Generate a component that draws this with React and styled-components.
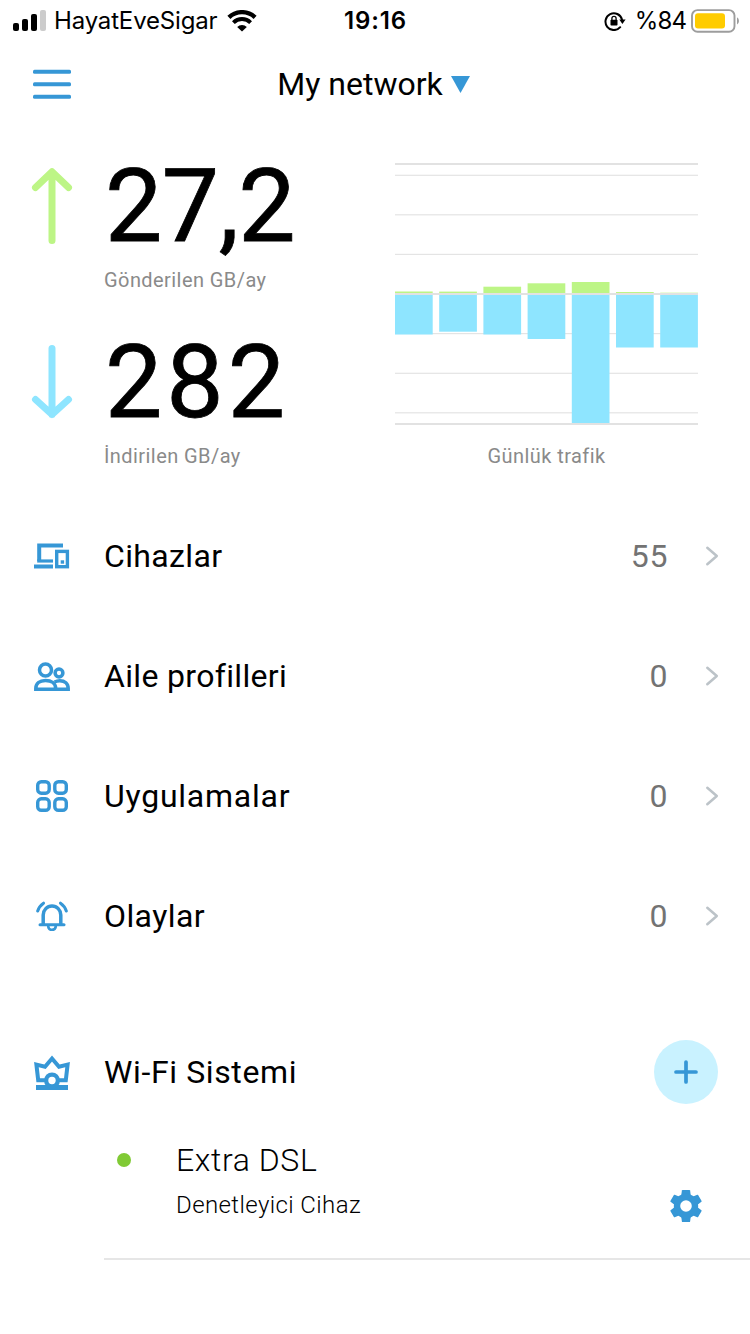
import React from "react";
import styled, { createGlobalStyle } from "styled-components";

const BLUE = "#3697d6";
const GREEN = "#bdf586";
const SKY = "#8ee5ff";

const GlobalStyle = createGlobalStyle`
  * { box-sizing: border-box; }
  body {
    margin: 0;
    background: #fff;
    color: #000;
    font-family: Roboto, "Noto Sans", sans-serif;
  }
`;

const Screen = styled.main`
  width: 750px;
  height: 1334px;
  overflow: hidden;
  background: #fff;
`;

const StatusBar = styled.div`
  display: grid;
  grid-template-columns: 1fr auto 1fr;
  align-items: center;
  height: 40px;
  padding: 0 11px 0 13px;
  font-family: Inter, sans-serif;
  font-size: 24px;
  line-height: 40px;
`;

const StatusGroup = styled.div`
  display: flex;
  align-items: center;
  justify-content: ${(p) => p.$align || "flex-start"};
`;

const Carrier = styled.span`
  margin: 1px 10px 0 7px;
  letter-spacing: -0.16px;
`;

const Clock = styled.span`
  margin: 1px 1px 0 0;
  font-weight: 600;
  letter-spacing: 0.9px;
`;

const Percent = styled.span`
  margin: 1px 5px 0 9px;
  letter-spacing: -0.9px;
`;

const Header = styled.header`
  display: grid;
  grid-template-columns: 71px 1fr 71px;
  align-items: center;
  height: 88px;
`;

const IconButton = styled.button`
  display: flex;
  align-items: center;
  justify-content: flex-end;
  padding: 0;
  border: 0;
  background: none;
`;

const NetworkPicker = styled.div`
  display: flex;
  align-items: center;
  justify-content: center;
  gap: 8px;
  padding-right: 3px;
  font-size: 32px;
  line-height: 40px;
`;

const Stats = styled.section`
  display: grid;
  grid-template-columns: 395px 303px;
  height: 368px;
  padding-top: 26px;
`;

const StatColumn = styled.div`
  display: flex;
  flex-direction: column;
  gap: 38px;
`;

const Stat = styled.div`
  display: grid;
  grid-template-columns: 104px 1fr;
`;

const StatArrow = styled.div`
  display: flex;
  justify-content: center;
  align-items: center;
  height: 104px;
`;

const StatValue = styled.div`
  height: 100px;
  padding-left: 1px;
  font-size: 102px;
  line-height: 104px;
  letter-spacing: ${(p) => p.$tracking}px;
  -webkit-text-stroke: 0.8px #000;
`;

const Caption = styled.div`
  font-size: 20px;
  line-height: 24px;
  letter-spacing: 0.43px;
  color: #8a8a8a;
`;

const StatCaption = styled(Caption)`
  margin-top: 14px;
`;

const ChartColumn = styled.div`
  display: flex;
  flex-direction: column;
  align-items: center;
  padding-top: 6px;
`;

const ChartCaption = styled(Caption)`
  margin-top: 16px;
`;

const Row = styled.div`
  display: grid;
  grid-template-columns: 104px 1fr auto 82px;
  align-items: center;
  height: 120px;
  font-size: 32px;
  line-height: 40px;
`;

const RowIcon = styled.div`
  display: flex;
  justify-content: center;
`;

const RowLabel = styled.div`
  letter-spacing: ${(p) => p.$tracking}px;
`;

const RowCount = styled.div`
  font-size: 32px;
  color: #737373;
  letter-spacing: 0.6px;
`;

const RowChevron = styled.div`
  display: flex;
  justify-content: flex-end;
  padding-right: 31px;
`;

const SystemHeader = styled.div`
  display: grid;
  grid-template-columns: 104px 1fr 64px;
  align-items: center;
  height: 64px;
  margin-top: 64px;
  padding-right: 32px;
  font-size: 32px;
  line-height: 40px;
`;

const AddButton = styled.button`
  display: flex;
  align-items: center;
  justify-content: center;
  width: 64px;
  height: 64px;
  padding: 0;
  border: 0;
  border-radius: 50%;
  background: #c9f2ff;
`;

const Device = styled.div`
  display: grid;
  grid-template-columns: 72px 1fr auto;
  height: 156px;
  margin-left: 104px;
  padding: 36px 48px 0 0;
  border-bottom: 2px solid #e6e6e6;
`;

const OnlineDot = styled.div`
  width: 14px;
  height: 14px;
  margin: 13px 0 0 13px;
  border-radius: 50%;
  background: #80ca35;
`;

const DeviceName = styled.div`
  font-size: 32px;
  font-weight: 300;
  line-height: 40px;
  letter-spacing: 0.6px;
`;

const DeviceRole = styled.div`
  margin-top: 10px;
  font-size: 24px;
  font-weight: 300;
  line-height: 30px;
  letter-spacing: 0.4px;
`;

const SettingsButton = styled(IconButton)`
  align-self: start;
  margin-top: 50px;
`;

const SignalIcon = () => (
  <svg width="34" height="24" viewBox="0 0 34 24">
    <rect x="0" y="14" width="6" height="8" rx="2" />
    <rect x="9" y="10" width="6" height="12" rx="2" />
    <rect x="18" y="5" width="6" height="17" rx="2" />
    <rect x="27" y="1" width="6" height="21" rx="2" fill="#ccc" />
  </svg>
);

const WifiIcon = () => (
  <svg width="30" height="22" viewBox="0 0 30 22" fill="none" stroke="#000">
    <path d="M1.9 7.4A19 19 0 0 1 28.1 7.4" strokeWidth="4.4" />
    <path d="M6.4 12.6A12.3 12.3 0 0 1 23.6 12.6" strokeWidth="4" />
    <path d="M10.2 16.9A6.8 6.8 0 0 1 19.8 16.9L15 21.5Z" fill="#000" stroke="none" />
  </svg>
);

const RotationLockIcon = () => (
  <svg width="22" height="20" viewBox="0 0 22 20" fill="none" stroke="#000">
    <path d="M16.2 16.2A8.4 8.4 0 1 1 18 8.5" strokeWidth="2" strokeLinecap="round" />
    <path d="M15.3 8.4H21.6L18.4 12.9Z" fill="#000" stroke="none" />
    <rect x="6.5" y="8.8" width="7" height="5.8" rx="0.8" fill="#000" stroke="none" />
    <path d="M7.9 9V7.4A2.1 2.1 0 0 1 12.1 7.4V9" strokeWidth="1.3" />
  </svg>
);

const BatteryIcon = () => (
  <svg width="48" height="24" viewBox="0 0 48 24">
    <rect x="1" y="1.1" width="42.5" height="21.6" rx="5.5" fill="none" stroke="#9d9d9d" strokeWidth="1.9" />
    <rect x="4" y="4.2" width="30" height="15.4" rx="3" fill="#fc0" />
    <path d="M46 8.3Q48 9.5 48 12Q48 14.5 46 15.5Z" fill="#9d9d9d" />
  </svg>
);

const MenuIcon = () => (
  <svg width="38" height="30" viewBox="0 0 38 30" fill={BLUE}>
    <rect width="38" height="4" rx="1.5" y="0.7" />
    <rect width="38" height="4" rx="1.5" y="13.2" />
    <rect width="38" height="4" rx="1.5" y="25.7" />
  </svg>
);

const DropdownIcon = () => (
  <svg width="19" height="17" viewBox="0 0 19 17">
    <path d="M0 0H19L9.5 17Z" fill={BLUE} />
  </svg>
);

const Arrow = ({ down }) => (
  <svg width="42" height="78" viewBox="0 0 42 78" fill="none" stroke={down ? SKY : GREEN} strokeWidth="7" strokeLinecap="round" strokeLinejoin="round">
    {down ? (
      <path d="M21 5.5V71.5M4.5 56.5L21 71.5L37.5 56.5" />
    ) : (
      <path d="M21 73.5V5.5M4.5 20.5L21 4.8L37.5 20.5" />
    )}
  </svg>
);

const DevicesIcon = () => (
  <svg width="36" height="26" viewBox="0 0 36 26" fill="none" stroke={BLUE}>
    <path d="M29 2.5H5.2V18" strokeWidth="4" />
    <path d="M3.2 18H19" strokeWidth="3.2" />
    <path d="M0 23.5H19" strokeWidth="4" />
    <rect x="22.7" y="8.4" width="10.7" height="15.3" strokeWidth="3.4" />
    <rect x="26.7" y="17.3" width="3.4" height="3.4" fill={BLUE} stroke="none" />
  </svg>
);

const FamilyIcon = () => (
  <svg width="36" height="30" viewBox="0 -1.5 36 30" fill="none" stroke={BLUE} strokeWidth="3.5">
    <circle cx="11.5" cy="7.5" r="6" />
    <circle cx="25" cy="10.5" r="3.9" />
    <path d="M1.800 26.7V26C1.800 21 5.500 18 11.500 18C17.500 18 21.700 21 21.700 26V26.700Z" />
    <path d="M21.700 26.700H34.200V26C34.200 21 30.800 18.200 25.800 18.200C23.800 18.200 22 18.700 20.500 19.500" />
  </svg>
);

const AppsIcon = () => (
  <svg width="32" height="32" viewBox="0 0 32 32" fill="none" stroke={BLUE} strokeWidth="3.4">
    <rect x="1.7" y="1.7" width="11.5" height="11.5" rx="3.6" />
    <rect x="18.8" y="1.7" width="11.5" height="11.5" rx="3.6" />
    <rect x="1.7" y="18.8" width="11.5" height="11.5" rx="3.6" />
    <rect x="18.8" y="18.8" width="11.5" height="11.5" rx="3.6" />
  </svg>
);

const BellIcon = () => (
  <svg width="32" height="30" viewBox="0 0 32 30" fill="none" stroke={BLUE} strokeWidth="3" strokeLinecap="round">
    <path d="M4 23.8H28" />
    <path d="M7.200 23V14A8.800 9 0 0 1 24.800 14V23" strokeWidth="3.5" />
    <path d="M1.700 10Q3.200 5.200 7.500 2.200M30.300 10Q28.800 5.200 24.500 2.200" />
    <path d="M12.300 25.600A3.700 3.300 0 0 0 19.700 25.600" strokeWidth="2.800" />
  </svg>
);

const CrownIcon = () => (
  <svg width="36" height="36" viewBox="0 0 36 36" fill="none" stroke={BLUE}>
    <path d="M12 26.200H4.200L2.400 10.600L11 12.800L18 4.500L25 12.800L33.600 10.600L31.800 26.200H24" strokeWidth="4" />
    <rect x="2" y="31" width="32" height="5" fill={BLUE} stroke="none" />
    <circle cx="18" cy="26.500" r="8" fill={BLUE} stroke="none" />
    <circle cx="18" cy="26.500" r="3.700" fill="#fff" stroke="none" />
  </svg>
);

const ChevronIcon = () => (
  <svg width="14" height="22" viewBox="0 0 14 22" fill="none" stroke="#bcc3c8" strokeWidth="2.5" strokeLinecap="round" strokeLinejoin="round">
    <path d="M2.3 2.8L11.8 11L2.3 19.2" />
  </svg>
);

const PlusIcon = () => (
  <svg width="24" height="24" viewBox="0 0 24 24" stroke={BLUE} strokeWidth="3.7" strokeLinecap="round">
    <path d="M12 2V22M2 12H22" />
  </svg>
);

const GearIcon = () => (
  <svg width="32" height="32" viewBox="0 0 32 32">
    {[0, 60, 120, 180, 240, 300].map((angle) => (
      <path
        key={angle}
        fill={BLUE}
        transform={`rotate(${angle} 16 16)`}
        d="M12.500 0H19.500Q20 0 20.100 0.600L21.300 9H10.700L11.900 0.600Q12 0 12.500 0Z"
      />
    ))}
    <circle cx="16" cy="16" r="9" fill="none" stroke={BLUE} strokeWidth="6.400" />
  </svg>
);

const TRAFFIC = [
  { up: 2.5, down: 40.5 },
  { up: 2.4, down: 37.7 },
  { up: 7.3, down: 40.5 },
  { up: 10.7, down: 45 },
  { up: 12, down: 129.5 },
  { up: 2, down: 53.5 },
  { up: 1.3, down: 53.5 },
];
const GRID_LINES = [15.2, 54.7, 94.3, 173.5, 213.2, 252.7];
const AXIS_Y = 134;

const TrafficChart = () => (
  <svg width="303" height="268" viewBox="0 0 303 268">
    {GRID_LINES.map((y) => (
      <rect key={y} x="0" y={y - 0.5} width="303" height="1.2" fill="#e4e4e4" />
    ))}
    <rect y="3" width="303" height="2" fill="#e2e2e2" />
    {TRAFFIC.map((day, i) => (
      <g key={i}>
        <rect x={i * 44.2} y={AXIS_Y - day.up} width="37.7" height={day.up} fill={GREEN} />
        <rect x={i * 44.2} y={AXIS_Y} width="37.7" height={day.down} fill={SKY} />
      </g>
    ))}
    <rect y="133" width="303" height="2" fill="#e2e2e2" />
    <rect y="263" width="303" height="2" fill="#e2e2e2" />
  </svg>
);

const ROWS = [
  { label: "Cihazlar", count: "55", tracking: 0.35, Icon: DevicesIcon },
  { label: "Aile profilleri", count: "0", tracking: 0.33, Icon: FamilyIcon },
  { label: "Uygulamalar", count: "0", tracking: 0.75, Icon: AppsIcon },
  { label: "Olaylar", count: "0", tracking: 0.4, Icon: BellIcon },
];

export default function App() {
  return (
    <Screen>
      <GlobalStyle />
      <StatusBar>
        <StatusGroup>
          <SignalIcon />
          <Carrier>HayatEveSigar</Carrier>
          <WifiIcon />
        </StatusGroup>
        <Clock>19:16</Clock>
        <StatusGroup $align="flex-end">
          <RotationLockIcon />
          <Percent>%84</Percent>
          <BatteryIcon />
        </StatusGroup>
      </StatusBar>
      <Header>
        <IconButton aria-label="Menu">
          <MenuIcon />
        </IconButton>
        <NetworkPicker>
          My network
          <DropdownIcon />
        </NetworkPicker>
      </Header>
      <Stats>
        <StatColumn>
          <Stat>
            <StatArrow>
              <Arrow />
            </StatArrow>
            <div>
              <StatValue $tracking={-0.5}>27,2</StatValue>
              <StatCaption>Gönderilen GB/ay</StatCaption>
            </div>
          </Stat>
          <Stat>
            <StatArrow>
              <Arrow down />
            </StatArrow>
            <div>
              <StatValue $tracking={4}>282</StatValue>
              <StatCaption>İndirilen GB/ay</StatCaption>
            </div>
          </Stat>
        </StatColumn>
        <ChartColumn>
          <TrafficChart />
          <ChartCaption>Günlük trafik</ChartCaption>
        </ChartColumn>
      </Stats>
      {ROWS.map(({ label, count, tracking, Icon }) => (
        <Row key={label}>
          <RowIcon>
            <Icon />
          </RowIcon>
          <RowLabel $tracking={tracking}>{label}</RowLabel>
          <RowCount>{count}</RowCount>
          <RowChevron>
            <ChevronIcon />
          </RowChevron>
        </Row>
      ))}
      <SystemHeader>
        <RowIcon>
          <CrownIcon />
        </RowIcon>
        <RowLabel $tracking={0.62}>Wi-Fi Sistemi</RowLabel>
        <AddButton aria-label="+">
          <PlusIcon />
        </AddButton>
      </SystemHeader>
      <Device>
        <OnlineDot />
        <div>
          <DeviceName>Extra DSL</DeviceName>
          <DeviceRole>Denetleyici Cihaz</DeviceRole>
        </div>
        <SettingsButton>
          <GearIcon />
        </SettingsButton>
      </Device>
    </Screen>
  );
}
